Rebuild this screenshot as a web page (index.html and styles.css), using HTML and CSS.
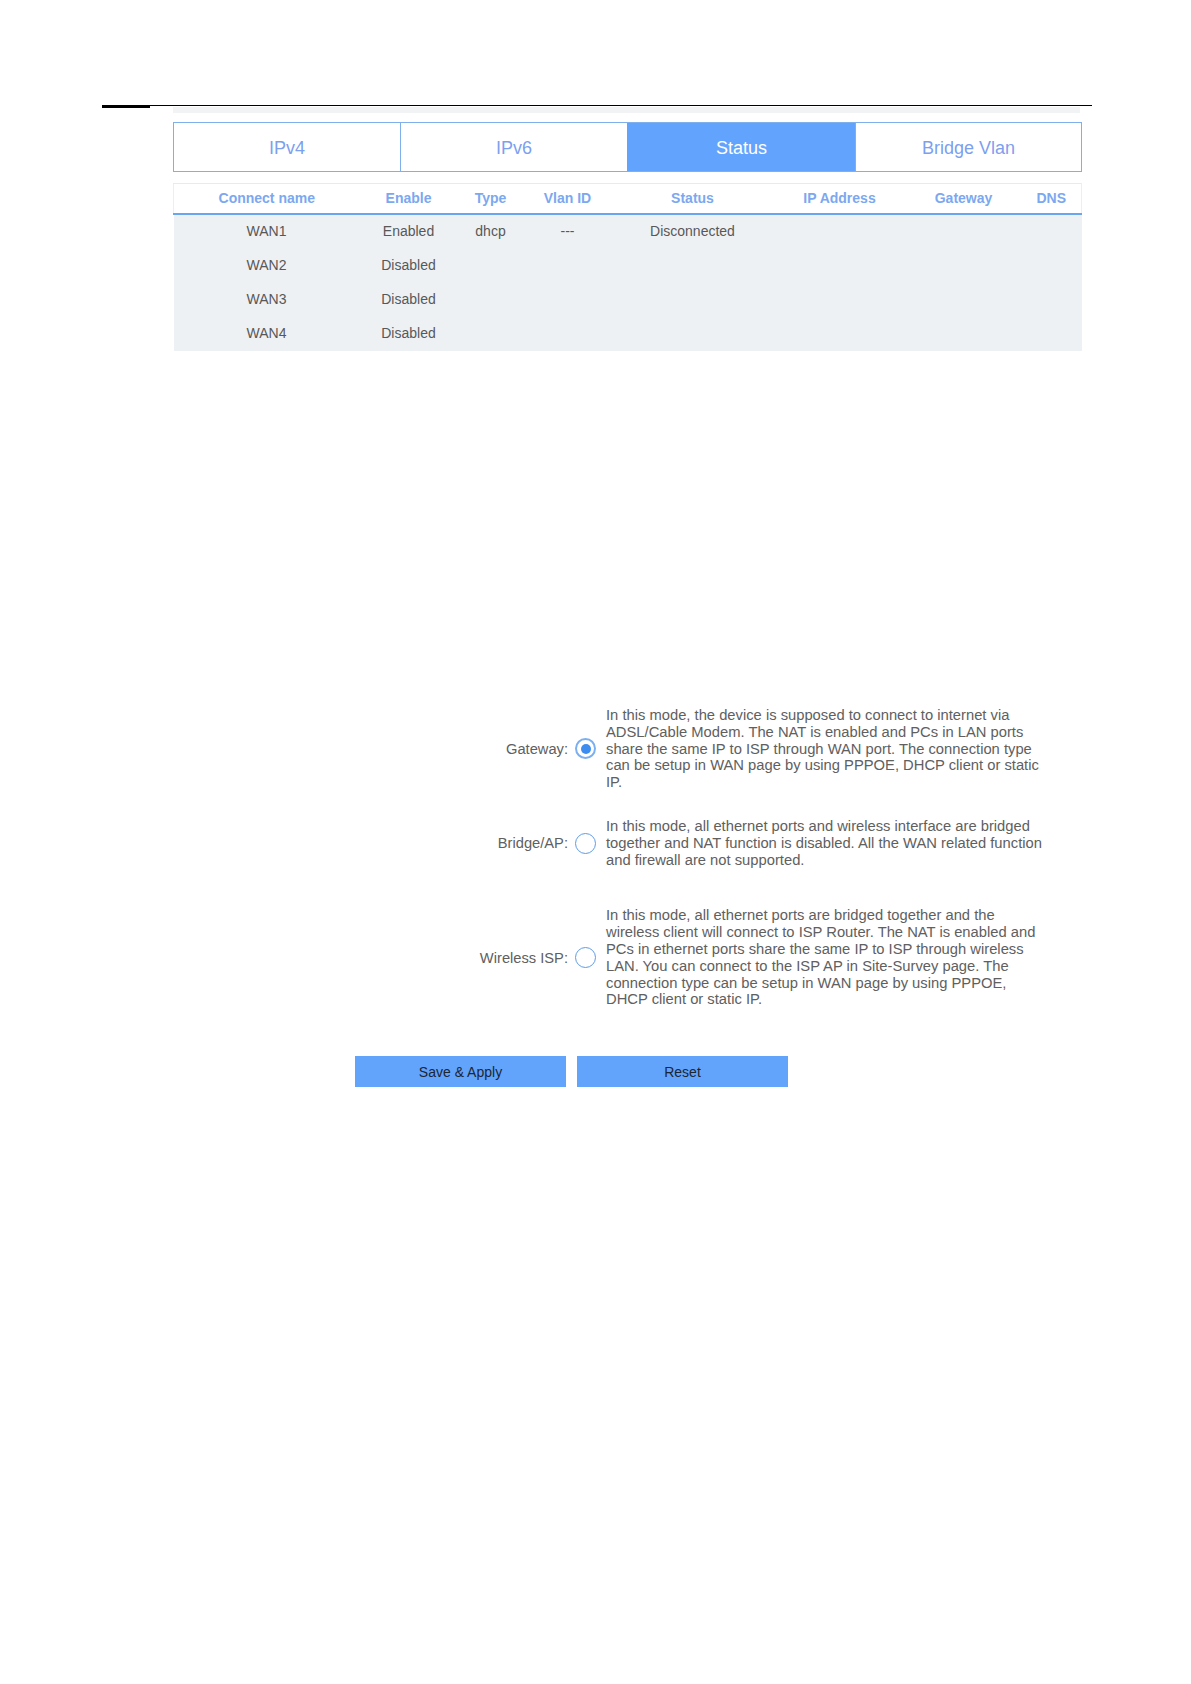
FILE: index.html
```html
<!DOCTYPE html>
<html lang="en">
<head>
<meta charset="utf-8">
<title>WAN Status</title>
<link rel="stylesheet" href="styles.css">
</head>
<body>
<div class="page">
  <div class="rule">
    <div class="rule-thick"></div>
    <div class="rule-band"></div>
  </div>

  <div class="tabs">
    <div class="tab">IPv4</div>
    <div class="tab">IPv6</div>
    <div class="tab tab-active">Status</div>
    <div class="tab">Bridge Vlan</div>
  </div>

  <table class="status-table">
    <colgroup>
      <col class="c1"><col class="c2"><col class="c3"><col class="c4">
      <col class="c5"><col class="c6"><col class="c7"><col class="c8">
    </colgroup>
    <thead>
      <tr>
        <th>Connect name</th><th>Enable</th><th>Type</th><th>Vlan ID</th>
        <th>Status</th><th>IP Address</th><th>Gateway</th><th>DNS</th>
      </tr>
    </thead>
    <tbody>
      <tr><td>WAN1</td><td>Enabled</td><td>dhcp</td><td>---</td><td>Disconnected</td><td></td><td></td><td></td></tr>
      <tr><td>WAN2</td><td>Disabled</td><td></td><td></td><td></td><td></td><td></td><td></td></tr>
      <tr><td>WAN3</td><td>Disabled</td><td></td><td></td><td></td><td></td><td></td><td></td></tr>
      <tr><td>WAN4</td><td>Disabled</td><td></td><td></td><td></td><td></td><td></td><td></td></tr>
    </tbody>
  </table>

  <div class="modes">
    <div class="mode mode-gateway">
      <div class="mode-label">Gateway:</div>
      <div class="radio radio-checked"><span class="radio-dot"></span></div>
      <div class="mode-desc">In this mode, the device is supposed to connect to internet via<br>ADSL/Cable Modem. The NAT is enabled and PCs in LAN ports<br>share the same IP to ISP through WAN port. The connection type<br>can be setup in WAN page by using PPPOE, DHCP client or static<br>IP.</div>
    </div>
    <div class="mode mode-bridge">
      <div class="mode-label">Bridge/AP:</div>
      <div class="radio"></div>
      <div class="mode-desc">In this mode, all ethernet ports and wireless interface are bridged<br>together and NAT function is disabled. All the WAN related function<br>and firewall are not supported.</div>
    </div>
    <div class="mode mode-wisp">
      <div class="mode-label">Wireless ISP:</div>
      <div class="radio"></div>
      <div class="mode-desc">In this mode, all ethernet ports are bridged together and the<br>wireless client will connect to ISP Router. The NAT is enabled and<br>PCs in ethernet ports share the same IP to ISP through wireless<br>LAN. You can connect to the ISP AP in Site-Survey page. The<br>connection type can be setup in WAN page by using PPPOE,<br>DHCP client or static IP.</div>
    </div>
  </div>

  <div class="actions">
    <button class="btn" type="button">Save &amp; Apply</button>
    <button class="btn" type="button">Reset</button>
  </div>
</div>
</body>
</html>
```

FILE: styles.css
```css
html, body {
  margin: 0;
  padding: 0;
  background: #ffffff;
}

.page {
  width: 1191px;
  min-height: 1684px;
  font-family: "Liberation Sans", Arial, sans-serif;
  padding-top: 105px;
  box-sizing: border-box;
}

/* top rule */
.rule {
  margin-left: 102px;
  width: 990px;
  border-top: 1px solid #000000;
  display: flex;
  align-items: flex-start;
}
.rule-thick {
  width: 48px;
  height: 2px;
  background: #000000;
}
.rule-band {
  margin-left: 23px;
  margin-top: 1px;
  width: 907px;
  height: 6px;
  background: #f2f3f4;
}

/* tabs */
.tabs {
  margin-top: 9px;
  margin-left: 173px;
  width: 909px;
  height: 50px;
  box-sizing: border-box;
  border: 1px solid #80b0ec;
  display: grid;
  grid-template-columns: 226px 227px 228px 1fr;
}
.tab {
  display: flex;
  align-items: center;
  justify-content: center;
  padding-top: 2px;
  font-size: 18px;
  color: #7c9ff0;
  border-left: 1px solid #80b0ec;
}
.tab:first-child {
  border-left: none;
}
.tab-active {
  background: #62a4fd;
  color: #ffffff;
  border-left-color: #62a4fd;
}

/* status table */
.status-table {
  margin-top: 11px;
  margin-left: 173px;
  width: 908px;
  border-collapse: collapse;
  table-layout: fixed;
}
.c1 { width: 186px; }
.c2 { width: 98px; }
.c3 { width: 66px; }
.c4 { width: 88px; }
.c5 { width: 162px; }
.c6 { width: 132px; }
.c7 { width: 116px; }
.c8 { width: 60px; }

.status-table thead tr {
  border-top: 1px solid #e8eaec;
  border-left: 1px solid #eceef0;
  border-right: 1px solid #eceef0;
  border-bottom: 2px solid #6aa5ef;
}
.status-table th {
  height: 28px;
  padding: 0 0 1px 0;
  font-size: 14px;
  font-weight: bold;
  color: #7ca8f0;
  text-align: center;
  background: #ffffff;
}
.status-table tbody {
  background: #eef1f3;
}
.status-table td {
  height: 31px;
  padding: 0 0 3px 0;
  font-size: 14px;
  color: #585858;
  text-align: center;
}

/* operation modes */
.modes {
  margin-top: 356px;
  display: flex;
  flex-direction: column;
}
.mode {
  display: flex;
  align-items: center;
}
.mode-bridge { margin-top: 27px; }
.mode-wisp { margin-top: 39px; }

.mode-label {
  width: 568px;
  text-align: right;
  font-size: 14.7px;
  color: #606060;
  flex: none;
}
.radio {
  flex: none;
  margin-left: 7px;
  width: 21px;
  height: 21px;
  box-sizing: border-box;
  border: 1.5px solid #5e9ce8;
  border-radius: 50%;
  display: flex;
  align-items: center;
  justify-content: center;
}
.radio-checked {
  border: 2px solid #7ab0f2;
}
.radio-dot {
  width: 10px;
  height: 10px;
  border-radius: 50%;
  background: #3d8cf0;
}
.mode-desc {
  margin-left: 10px;
  font-size: 14.75px;
  line-height: 16.8px;
  color: #606060;
  white-space: nowrap;
}

/* buttons */
.actions {
  margin-top: 48px;
  margin-left: 355px;
  display: flex;
  gap: 11px;
}
.btn {
  width: 211px;
  height: 31px;
  border: none;
  background: #62a4fc;
  color: #1c2633;
  font-family: "Liberation Sans", Arial, sans-serif;
  font-size: 14px;
  padding: 0;
}
```
